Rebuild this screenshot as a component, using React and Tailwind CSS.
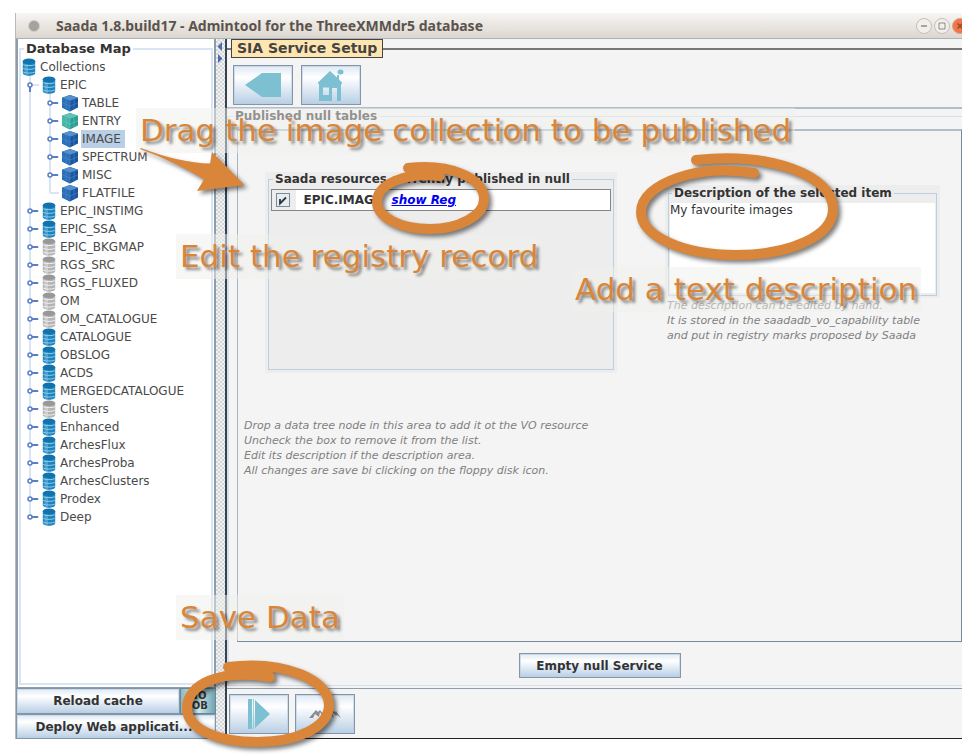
import { useState } from 'react';

const cubes = [
  { label: 'TABLE' },
  { label: 'ENTRY', green: true },
  { label: 'IMAGE', selected: true },
  { label: 'SPECTRUM' },
  { label: 'MISC' },
  { label: 'FLATFILE', leaf: true },
];

const collections = [
  { label: 'EPIC_INSTIMG' },
  { label: 'EPIC_SSA' },
  { label: 'EPIC_BKGMAP', empty: true },
  { label: 'RGS_SRC', empty: true },
  { label: 'RGS_FLUXED', empty: true },
  { label: 'OM', empty: true },
  { label: 'OM_CATALOGUE', empty: true },
  { label: 'CATALOGUE' },
  { label: 'OBSLOG' },
  { label: 'ACDS' },
  { label: 'MERGEDCATALOGUE' },
  { label: 'Clusters', empty: true },
  { label: 'Enhanced' },
  { label: 'ArchesFlux' },
  { label: 'ArchesProba' },
  { label: 'ArchesClusters' },
  { label: 'Prodex' },
  { label: 'Deep' },
];

const buttonStyle =
  'border border-[#8496a6] bg-linear-to-b from-[#dfe9f3] via-white via-30% to-[#b9cfe5] shadow-[inset_0_0_0_1px_rgba(184,207,229,0.6)]';

function DatabaseIcon({ empty }) {
  const body = empty ? '#b4b4b4' : '#1d83bd';
  const top = empty ? '#989898' : '#1173ad';
  const shine = empty ? '#efefef' : '#8fcbea';

  return (
    <svg width="14" height="18" viewBox="0 0 14 18" className="shrink-0">
      <path
        d="M.8 3.500v11.500c0 1.700 2.800 2.700 6.200 2.700s6.200-1 6.200-2.700V3.500z"
        fill={body}
      />
      <path d="M2.500 6v10.500l3.500.9V6.500z" fill={shine} opacity="0.4" />
      <path
        d="M.8 6.300c1.400 1.800 11 1.800 12.400 0M.8 10c1.400 1.800 11 1.800 12.400 0M.8 13.700c1.400 1.800 11 1.800 12.400 0"
        fill="none"
        stroke={shine}
        strokeWidth="1"
      />
      <ellipse cx="7" cy="3.300" rx="6.200" ry="2.800" fill={top} />
    </svg>
  );
}

function CubeIcon({ green }) {
  return (
    <svg width="16" height="18" viewBox="0 0 16 18" className="shrink-0">
      <path d="M8 1l8 2.800v9.800L8 17.500 0 13.600V3.800z" fill={green ? '#2a9f93' : '#1a56a0'} />
      <path d="M8 1l8 2.800L8 6.800 0 3.800z" fill={green ? '#63c2b6' : '#5490cc'} />
      <path d="M0 3.800l8 3v10.700l-8-3.900z" fill={green ? '#45b5a8' : '#2a6fb8'} />
      <path
        d="M4 5.300v10.200M0 8.600l8 3.600 8-3.600M12 5.300v10.200M8 6.800v10.700"
        fill="none"
        stroke={green ? '#7fd2c6' : '#5f97d1'}
        strokeWidth="0.4"
      />
    </svg>
  );
}

// Guide lines and expand handle at the left of a tree row
function Branch({ depth, open, leaf, last }) {
  const x = depth === 2 ? 28 : 8;

  return (
    <svg width={depth * 20} height="18" className="shrink-0">
      {depth === 2 && <path d="M8 0v18" stroke="#d9e5f2" strokeWidth="2" />}
      <path
        d={last ? `M${x} 0v9` : `M${x} 0v18`}
        stroke="#d9e5f2"
        strokeWidth="2"
      />
      <path d={`M${x} 9h9`} stroke="#d9e5f2" strokeWidth="2" />
      {!leaf && (
        <>
          <path
            d={open ? `M${x} 10v6` : `M${x + 2} 9h6`}
            stroke="#5a7fc4"
            strokeWidth="2"
          />
          <circle
            cx={x}
            cy="9"
            r="2"
            fill="#fff"
            stroke="#5a7fc4"
            strokeWidth="1.500"
          />
        </>
      )}
    </svg>
  );
}

function TreeLabel({ selected, children }) {
  return (
    <span
      className={
        selected
          ? 'ml-[3px] bg-[#b8cfe5] pr-1 pl-px leading-[18px]'
          : 'ml-[3px] pl-px leading-[18px]'
      }
    >
      {children}
    </span>
  );
}

function DatabaseTree() {
  return (
    <ul className="pl-px text-xs text-[#4a4a4a]">
      <li className="flex h-[18px] items-center">
        <DatabaseIcon />
        <TreeLabel>Collections</TreeLabel>
      </li>
      <li>
        <div className="flex h-[18px] items-center">
          <Branch depth={1} open />
          <DatabaseIcon />
          <TreeLabel>EPIC</TreeLabel>
        </div>
        <ul>
          {cubes.map((item) => (
            <li key={item.label} className="flex h-[18px] items-center">
              <Branch depth={2} leaf={item.leaf} last={item.leaf} />
              <CubeIcon green={item.green} />
              <TreeLabel selected={item.selected}>{item.label}</TreeLabel>
            </li>
          ))}
        </ul>
      </li>
      {collections.map((item, index) => (
        <li key={item.label} className="flex h-[18px] items-center">
          <Branch depth={1} last={index === collections.length - 1} />
          <DatabaseIcon empty={item.empty} />
          <TreeLabel>{item.label}</TreeLabel>
        </li>
      ))}
    </ul>
  );
}

function TitleBar() {
  return (
    <header className="flex h-[26px] shrink-0 items-center border-b border-[#a9b3ba] bg-linear-to-b from-[#f7f6f3] to-[#dcd6cf] pl-3">
      <span className="h-3 w-3 rounded-full border border-[#d2cec9] bg-[#a5a29e]" />
      <h1 className="ml-4 flex-1 truncate font-['Noto_Sans'] text-sm font-bold text-[#5b534d]">
        Saada 1.8.build17 - Admintool for the ThreeXMMdr5 database
      </h1>
      <div className="-mr-[6px] flex gap-[2px]">
        <button aria-label="Minimize" className="rounded-full">
          <svg width="16" height="16" viewBox="0 0 16 16">
            <circle cx="8" cy="8" r="7.500" fill="#f1efec" stroke="#c4bfb9" />
            <path d="M5 8h6" stroke="#a7a29c" strokeWidth="2" />
          </svg>
        </button>
        <button aria-label="Maximize" className="rounded-full">
          <svg width="16" height="16" viewBox="0 0 16 16">
            <circle cx="8" cy="8" r="7.500" fill="#f1efec" stroke="#c4bfb9" />
            <path d="M5 5h6v6H5z" fill="none" stroke="#8f8a84" />
          </svg>
        </button>
        <button aria-label="Close" className="rounded-full">
          <svg width="16" height="16" viewBox="0 0 16 16">
            <circle cx="8" cy="8" r="7.500" fill="#f0764c" stroke="#d8a18c" />
            <path d="M5.500 5.500l5 5M10.500 5.500l-5 5" stroke="#9c4326" strokeWidth="1.500" />
          </svg>
        </button>
      </div>
    </header>
  );
}

function Sidebar() {
  return (
    <aside className="flex w-[200px] shrink-0 flex-col">
      <div className="flex flex-1 flex-col border-x-2 border-b border-[#8f9dab] bg-white px-px pt-px pb-[2px]">
        <fieldset className="min-w-0 flex-1 border-2 border-[#d9e5f2]">
          <legend className="ml-[3px] px-[2px] text-[13px] leading-[18px] font-bold text-[#333]">
            Database Map
          </legend>
          <DatabaseTree />
        </fieldset>
      </div>
      <div className="flex h-[26px]">
        <button
          className={`${buttonStyle} flex-1 text-xs font-bold text-[#333]`}
        >
          Reload cache
        </button>
        <button className="w-9 border border-[#6f8794] bg-linear-to-r from-[#8fb9c4] via-[#d5eeee] to-[#6fa3b2] text-[10px] leading-[10px] font-bold text-[#333]">
          NO
          <br />
          JOB
        </button>
      </div>
      <button
        className={`${buttonStyle} h-[25px] truncate pr-1 text-xs font-bold text-[#333]`}
      >
        Deploy Web applicati...
      </button>
    </aside>
  );
}

function Divider() {
  return (
    <div className="w-[9px] shrink-0 bg-[#f2f2f2] bg-[conic-gradient(#d3d6d8_25%,transparent_25%_50%,#d3d6d8_50%_75%,transparent_75%)] bg-[length:4px_4px]">
      <svg width="9" height="26" viewBox="0 0 9 26">
        <path d="M6 3v9L1.500 7.500zM2 15v9l4.500-4.500z" fill="#4a6bb0" />
      </svg>
    </div>
  );
}

function Toolbar() {
  return (
    <fieldset className="h-[68px] border-t-2 border-[#777]">
      <legend className="ml-1 h-[19px] border border-[#444] bg-[#ffe6b0] px-[5px] text-sm leading-[17px] font-bold text-[#444]">
        SIA Service Setup
      </legend>
      <div className="flex gap-2 px-[6px] pt-[7px]">
        <button
          aria-label="Back"
          className={`${buttonStyle} flex h-10 w-[60px] items-center justify-center`}
        >
          <svg width="36" height="24" viewBox="0 0 36 24">
            <path d="M0 12L17 0h19v24H17z" fill="#7cc0d1" />
          </svg>
        </button>
        <button
          aria-label="Home"
          className={`${buttonStyle} flex h-10 w-[60px] items-center justify-center`}
        >
          <svg width="28" height="32" viewBox="0 0 28 32">
            <path
              d="M13 2l7 6.500V6h2v4.500l3 3V15h-1v17h-4V19h-5v13H2V15H1v-1.500zM6 18.500V26h6v-7.500z"
              fill="#7cc0d1"
              fillRule="evenodd"
            />
            <ellipse cx="23.500" cy="3" rx="3" ry="2.500" fill="#7cc0d1" />
          </svg>
        </button>
      </div>
    </fieldset>
  );
}

function ResourceTable() {
  const [checked, setChecked] = useState(true);

  return (
    <div className="h-[201px] w-[352px] bg-[#ededed] px-[3px] pb-[3px]">
      <fieldset className="h-full border border-[#b8cfe5] px-[2px]">
        <legend className="ml-[2px] px-[2px] text-xs leading-[14px] font-bold text-[#333]">
          Saada resources currently published in null
        </legend>
        <table className="mt-[3px] w-full border border-[#858585] bg-white text-xs text-[#333]">
          <tbody>
            <tr className="h-[21px]">
              <td className="w-6 bg-[#ededed] pl-1">
                <label className="relative block h-[14px] w-[14px]">
                  <span className="sr-only">Publish EPIC.IMAGE</span>
                  <input
                    type="checkbox"
                    checked={checked}
                    onChange={(e) => setChecked(e.target.checked)}
                    className="block h-[14px] w-[14px] appearance-none border border-[#7a8a99] bg-[#e4edf6]"
                  />
                  {checked && (
                    <svg
                      width="14"
                      height="14"
                      viewBox="0 0 14 14"
                      className="pointer-events-none absolute top-0 left-0"
                    >
                      <path d="M4 6v4.500l6-6" fill="none" stroke="#333" strokeWidth="1.800" />
                    </svg>
                  )}
                </label>
              </td>
              <td className="w-[92px] pl-2 font-bold">EPIC.IMAGE</td>
              <td className="pl-1">
                <a href="#registry" className="font-bold text-[#0000ee] italic underline">
                  show Reg
                </a>
              </td>
            </tr>
          </tbody>
        </table>
      </fieldset>
    </div>
  );
}

function Description() {
  const [text, setText] = useState('My favourite images');

  return (
    <div className="flex w-[275px] flex-col">
      <div className="bg-[#ededed] px-[3px] pb-[2px]">
        <fieldset className="border border-[#b8cfe5] px-px pb-[2px]">
          <legend className="ml-[2px] px-[2px] text-xs leading-[16px] font-bold text-[#333]">
            <label htmlFor="description">Description of the selected item</label>
          </legend>
          <textarea
            id="description"
            value={text}
            onChange={(e) => setText(e.target.value)}
            className="mt-[2px] block h-[90px] w-full resize-none bg-white text-xs leading-[15px] text-[#333] outline-none"
          />
        </fieldset>
      </div>
      <p className="pl-[2px] text-[11px] leading-[15px] whitespace-nowrap text-[#808080] italic">
        The description can be edited by hand.
        <br />
        It is stored in the saadadb_vo_capability table
        <br />
        and put in registry marks proposed by Saada
      </p>
    </div>
  );
}

function PublishedTables() {
  return (
    <section className="flex flex-1 flex-col border-t-2 border-b border-t-[#b3bdc8] border-b-[#8f9dab] pb-[2px]">
      <fieldset className="flex min-w-0 flex-1 flex-col border-y border-l-2 border-[#d3e0ee]">
        <legend className="ml-1 px-[2px] text-xs leading-[14px] font-bold text-[#333]">
          Published null tables
        </legend>
        <div className="flex h-full flex-col">
          <div className="mt-[6px] ml-2 flex-1 border border-t-2 border-t-[#b3bdc8] border-r-[#7a8a99] border-b-[#7a8a99] border-l-[#a9b3bf] pl-1">
            <div className="flex gap-12 pt-[41px] pl-[23px]">
              <ResourceTable />
              <div className="pt-[13px]">
                <Description />
              </div>
            </div>
            <p className="mt-[45px] pl-[2px] text-[11px] leading-[15px] text-[#808080] italic">
              Drop a data tree node in this area to add it ot the VO resource
              <br />
              Uncheck the box to remove it from the list.
              <br />
              Edit its description if the description area.
              <br />
              All changes are save bi clicking on the floppy disk icon.
            </p>
          </div>
          <div className="flex h-[43px] items-center justify-center pt-1 pl-2">
            <button
              className={`${buttonStyle} h-[25px] w-[162px] text-xs font-bold text-[#333]`}
            >
              Empty null Service
            </button>
          </div>
        </div>
      </fieldset>
    </section>
  );
}

function ActionBar() {
  return (
    <div className="flex h-[50px] gap-[6px] border-b border-[#222] px-[2px] pt-[5px]">
      <button
        aria-label="Save"
        className={`${buttonStyle} flex h-10 w-[60px] items-center justify-center`}
      >
        <svg width="22" height="30" viewBox="0 0 22 30">
          <path d="M0 0h4v30H0zM5.300 0h.7v30h-.7zM7 1l15 14L7 29z" fill="#7cc0d1" />
        </svg>
      </button>
      <button
        aria-label="Preview"
        className={`${buttonStyle} flex h-10 w-[60px] items-center justify-center`}
      >
        <svg width="32" height="10" viewBox="0 0 32 10">
          <path
            d="M0 9l7-8 2 2 2-2 3 4 2-2 5-3 5 3 1-1 5 7-4-3-1 1-4-4 2 6-5-5-2 5-3-4-2 2-2-4-1 5-4-3-2 4z"
            fill="#8c8c8c"
          />
        </svg>
      </button>
    </div>
  );
}

function Note({ className, children }) {
  return (
    <p
      className={`absolute bg-[#f0f0ec]/50 px-1 py-[5px] text-[31px] leading-[35px] whitespace-nowrap text-[#d9863b] [text-shadow:3px_3px_3px_rgba(0,0,0,0.45)] ${className}`}
    >
      {children}
    </p>
  );
}

function Annotations() {
  return (
    <div className="pointer-events-none absolute top-0 left-0">
      <Note className="top-[108px] left-[136px]">
        Drag the image collection to be published
      </Note>
      <Note className="top-[234px] left-[176px]">Edit the registry record</Note>
      <Note className="top-[267px] left-[571px]">Add a text description</Note>
      <Note className="top-[595px] left-[176px]">Save Data</Note>
      <svg
        width="967"
        height="756"
        viewBox="0 0 967 756"
        className="relative max-w-none drop-shadow-[3px_3px_2px_rgba(0,0,0,0.5)]"
      >
        <path
          d="M141 148Q180 163 210 163.500L212 152 244.500 185 197 191 204 179.500Q178 163 140 149z"
          fill="#d9863b"
        />
        <g fill="none" stroke="#d9863b" strokeWidth="10" strokeLinecap="round">
          <path d="M408 168C450 163 484 178 484 199 484 216 458 229 430 229 400 229 377 217 377 202 377 184 405 172 440 176" />
          <path d="M696 160C770 152 833 175 833 209 833 236 790 255 736 255 683 255 641 236 641 212 641 183 700 163 754 173" />
          <path d="M228 667C285 660 329 680 329 705 329 727 297 742 258 742 215 742 187 728 187 708 187 684 220 669 270 677" />
          <path d="M412 170L438 174M232 669L268 674" />
        </g>
      </svg>
    </div>
  );
}

function App() {
  return (
    <div className="relative flex min-h-screen flex-col overflow-hidden bg-white pt-[13px] pr-[5px] pb-[17px] pl-[15px] font-['DejaVu_Sans',sans-serif]">
      <div className="flex flex-1 flex-col overflow-hidden border-l border-[#bdb8b2]">
        <TitleBar />
        <div className="flex flex-1">
          <Sidebar />
          <Divider />
          <main className="flex min-w-0 flex-1 flex-col border-l-2 border-[#36434f] bg-[#f4f4f4]">
            <Toolbar />
            <PublishedTables />
            <ActionBar />
          </main>
        </div>
      </div>
      <Annotations />
    </div>
  );
}

export default App;
